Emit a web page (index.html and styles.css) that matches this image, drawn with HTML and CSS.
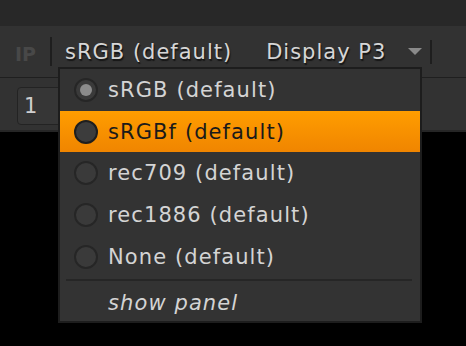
FILE: index.html
```html
<!DOCTYPE html>
<html lang="en">
<head>
  <meta charset="UTF-8" />
  <title>Viewer process</title>
  <link rel="stylesheet" href="styles.css">
</head>
<body>

<div class="titlebar"></div>

<div class="toolbar">
  <span class="ip-logo">IP</span>
  <span class="vsep"></span>
  <span class="tb-label tb-input">sRGB (default)</span>
  <span class="tb-label tb-display">Display P3</span>
  <span class="tb-arrow"></span>
  <span class="vsep vsep-right"></span>
</div>

<div class="framebar">
  <div class="frame-box">1</div>
</div>

<div class="popup-menu">
  <div class="menu-item">
    <span class="radio checked"></span>
    <span class="menu-text">sRGB (default)</span>
  </div>
  <div class="menu-item highlighted">
    <span class="radio"></span>
    <span class="menu-text">sRGBf (default)</span>
  </div>
  <div class="menu-item">
    <span class="radio"></span>
    <span class="menu-text">rec709 (default)</span>
  </div>
  <div class="menu-item">
    <span class="radio"></span>
    <span class="menu-text">rec1886 (default)</span>
  </div>
  <div class="menu-item">
    <span class="radio"></span>
    <span class="menu-text">None (default)</span>
  </div>
  <div class="menu-sep"></div>
  <div class="menu-item menu-action">
    <span class="menu-text">show panel</span>
  </div>
</div>

</body>
</html>
```

FILE: styles.css
```css
body {
  background: #000;
  color: #d0d0d0;
  font-family: 'DejaVu Sans', Verdana, sans-serif;
  margin: 0;
  padding: 0;
  width: 466px;
  height: 346px;
  overflow: hidden;
  position: relative;
}
.titlebar {
  height: 26px;
  background: #282828;
}
.toolbar {
  height: 51px;
  background: #323232;
  border-bottom: 1px solid #1f1f1f;
  display: flex;
  align-items: center;
  padding-left: 15px;
}
.ip-logo {
  font-weight: 700;
  font-size: 19px;
  color: #484848;
  width: 25px;
  margin-top: 4px;
}
.vsep {
  width: 2px;
  height: 29px;
  background: #1e1e1e;
  margin-left: 10px;
}
.vsep-right {
  height: 24px;
  margin-left: 8px;
}
.tb-label {
  font-size: 21px;
  letter-spacing: 1px;
  color: #d6d6d6;
  text-shadow: 1px 2px 1px #151515;
}
.tb-input {
  margin-left: 13px;
}
.tb-display {
  margin-left: 34px;
}
.tb-arrow {
  width: 0;
  height: 0;
  border-left: 7px solid transparent;
  border-right: 7px solid transparent;
  border-top: 7px solid #8a8a8a;
  margin-left: auto;
}
.toolbar .vsep-right {
  margin-right: 34px;
}
.framebar {
  height: 54px;
  background: #323232;
  border-bottom: 2px solid #262626;
  box-sizing: border-box;
  padding: 9px 0 0 17px;
}
.frame-box {
  width: 70px;
  height: 38px;
  box-sizing: border-box;
  background: #363636;
  border: 1px solid #232323;
  border-radius: 4px;
  font-size: 21px;
  line-height: 36px;
  padding-left: 6px;
  color: #cfcfcf;
}
.popup-menu {
  position: absolute;
  left: 58px;
  top: 67px;
  width: 364px;
  height: 256px;
  box-sizing: border-box;
  background: #333;
  border: 2px solid #1d1d1d;
}
.menu-item {
  height: 42px;
  display: flex;
  align-items: center;
  padding-left: 14px;
  font-size: 21px;
  letter-spacing: 1.1px;
  color: #d4d4d4;
}
.menu-item.highlighted {
  height: 41px;
  background: linear-gradient(#ff9d00, #f08500);
  color: #1a1a1a;
}
.radio {
  width: 24px;
  height: 24px;
  box-sizing: border-box;
  border-radius: 50%;
  border: 2px solid #262626;
  background: #3a3a3a;
  margin-right: 10px;
  display: flex;
  align-items: center;
  justify-content: center;
}
.radio.checked::after {
  content: "";
  width: 12px;
  height: 12px;
  border-radius: 50%;
  background: #8c8c8c;
}
.highlighted .radio {
  border-color: #1e1e1e;
  background: #3c3c3c;
}
.menu-sep {
  height: 2px;
  background: #262626;
  margin: 1px 8px 0 6px;
}
.menu-action {
  padding-left: 48px;
  font-style: italic;
  height: 44px;
}
```
